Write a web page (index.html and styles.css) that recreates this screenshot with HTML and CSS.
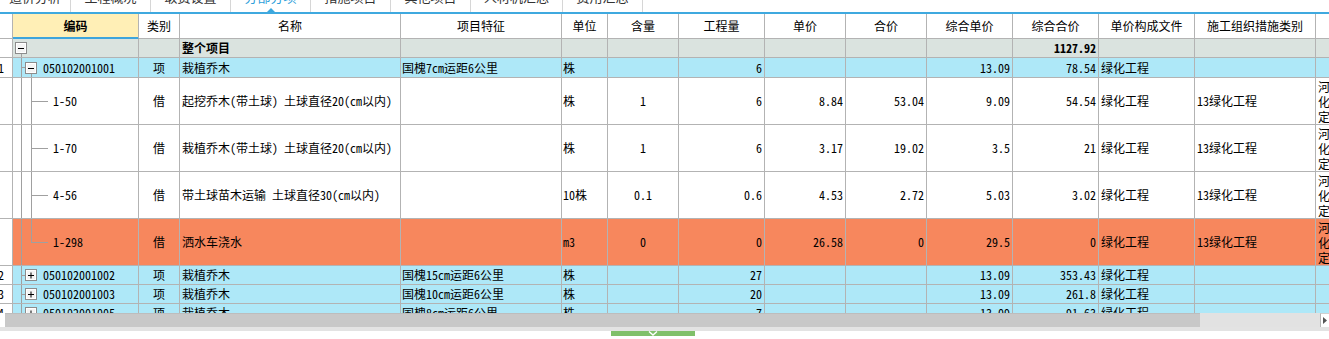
FILE: index.html
```html
<!DOCTYPE html>
<html lang="zh-CN">
<head>
<meta charset="utf-8">
<title>分部分项</title>
<link rel="stylesheet" href="styles.css">
</head>
<body>
<div class="tabs">
  <div class="tab first"><span class="tl">造价分析</span></div>
  <div class="tab"><span class="tl">工程概况</span></div>
  <div class="tab"><span class="tl">取费设置</span></div>
  <div class="tab active"><span class="tl">分部分项</span><span class="notch"></span></div>
  <div class="tab"><span class="tl">措施项目</span></div>
  <div class="tab"><span class="tl">其他项目</span></div>
  <div class="tab wide"><span class="tl">人材机汇总</span></div>
  <div class="tab"><span class="tl">费用汇总</span></div>
</div>
<div class="topline"></div>

<div class="grid">
  <div class="row head">
    <div></div><div class="ctr sel b">编码</div><div class="ctr">类别</div><div class="ctr">名称</div><div class="ctr">项目特征</div><div class="ctr">单位</div><div class="ctr">含量</div><div class="ctr">工程量</div><div class="ctr">单价</div><div class="ctr">合价</div><div class="ctr">综合单价</div><div class="ctr">综合合价</div><div class="ctr">单价构成文件</div><div class="ctr">施工组织措施类别</div><div></div>
  </div>

  <div class="row root">
    <div></div>
    <div class="code rootcode"><span class="node down"><svg width="12" height="12" viewBox="0 0 12 12"><rect x="0.5" y="0.5" width="11" height="11" fill="#f4f4f4" stroke="#8c8c8c"/><rect x="1.5" y="1.5" width="9" height="9" fill="none" stroke="#ffffff"/><path d="M3 6.5H9" stroke="#000" stroke-width="1"/></svg></span></div>
    <div></div><div class="l b">整个项目</div><div></div><div></div><div></div><div></div><div></div><div></div><div></div><div class="r b">1127.92</div><div></div><div></div><div></div>
  </div>

  <div class="row parent r1">
    <div class="num">1</div>
    <div class="code"><span class="gh"></span><span class="node down"><svg width="12" height="12" viewBox="0 0 12 12"><rect x="0.5" y="0.5" width="11" height="11" fill="#f4f4f4" stroke="#8c8c8c"/><rect x="1.5" y="1.5" width="9" height="9" fill="none" stroke="#ffffff"/><path d="M3 6.5H9" stroke="#000" stroke-width="1"/></svg></span><span class="txt">050102001001</span></div>
    <div class="ctr">项</div><div class="l">栽植乔木</div><div class="l1">国槐7cm运距6公里</div><div class="l1">株</div><div></div><div class="r">6</div><div></div><div></div><div class="r">13.09</div><div class="r">78.54</div><div class="l">绿化工程</div><div></div><div></div>
  </div>

  <div class="row child">
    <div></div>
    <div class="code"><span class="g"></span><span class="br"></span><span class="ctxt">1-50</span></div>
    <div class="ctr">借</div><div class="l">起挖乔木(带土球) 土球直径20(cm以内)</div><div></div><div class="l1">株</div><div class="ctr">1</div><div class="r">6</div><div class="r">8.84</div><div class="r">53.04</div><div class="r">9.09</div><div class="r">54.54</div><div class="l">绿化工程</div><div class="l">13绿化工程</div><div class="wrap">河<br>化<br>定</div>
  </div>

  <div class="row child">
    <div></div>
    <div class="code"><span class="g"></span><span class="br"></span><span class="ctxt">1-70</span></div>
    <div class="ctr">借</div><div class="l">栽植乔木(带土球) 土球直径20(cm以内)</div><div></div><div class="l1">株</div><div class="ctr">1</div><div class="r">6</div><div class="r">3.17</div><div class="r">19.02</div><div class="r">3.5</div><div class="r">21</div><div class="l">绿化工程</div><div class="l">13绿化工程</div><div class="wrap">河<br>化<br>定</div>
  </div>

  <div class="row child">
    <div></div>
    <div class="code"><span class="g"></span><span class="br"></span><span class="ctxt">4-56</span></div>
    <div class="ctr">借</div><div class="l">带土球苗木运输 土球直径30(cm以内)</div><div></div><div class="l1">10株</div><div class="ctr">0.1</div><div class="r">0.6</div><div class="r">4.53</div><div class="r">2.72</div><div class="r">5.03</div><div class="r">3.02</div><div class="l">绿化工程</div><div class="l">13绿化工程</div><div class="wrap">河<br>化<br>定</div>
  </div>

  <div class="row child hot">
    <div></div>
    <div class="code"><span class="g"></span><span class="br last"></span><span class="ctxt">1-298</span></div>
    <div class="ctr">借</div><div class="l">洒水车浇水</div><div></div><div class="l1">m3</div><div class="ctr">0</div><div class="r">0</div><div class="r">26.58</div><div class="r">0</div><div class="r">29.5</div><div class="r">0</div><div class="l">绿化工程</div><div class="l">13绿化工程</div><div class="wrap">河<br>化<br>定</div>
  </div>

  <div class="row parent">
    <div class="num">2</div>
    <div class="code"><span class="gh"></span><span class="node"><svg width="12" height="12" viewBox="0 0 12 12"><rect x="0.5" y="0.5" width="11" height="11" fill="#f4f4f4" stroke="#8c8c8c"/><rect x="1.5" y="1.5" width="9" height="9" fill="none" stroke="#ffffff"/><path d="M3 6.5H9M6 3.5V9.5" stroke="#000" stroke-width="1"/></svg></span><span class="txt">050102001002</span></div>
    <div class="ctr">项</div><div class="l">栽植乔木</div><div class="l1">国槐15cm运距6公里</div><div class="l1">株</div><div></div><div class="r">27</div><div></div><div></div><div class="r">13.09</div><div class="r">353.43</div><div class="l">绿化工程</div><div></div><div></div>
  </div>

  <div class="row parent">
    <div class="num">3</div>
    <div class="code"><span class="gh"></span><span class="node"><svg width="12" height="12" viewBox="0 0 12 12"><rect x="0.5" y="0.5" width="11" height="11" fill="#f4f4f4" stroke="#8c8c8c"/><rect x="1.5" y="1.5" width="9" height="9" fill="none" stroke="#ffffff"/><path d="M3 6.5H9M6 3.5V9.5" stroke="#000" stroke-width="1"/></svg></span><span class="txt">050102001003</span></div>
    <div class="ctr">项</div><div class="l">栽植乔木</div><div class="l1">国槐10cm运距6公里</div><div class="l1">株</div><div></div><div class="r">20</div><div></div><div></div><div class="r">13.09</div><div class="r">261.8</div><div class="l">绿化工程</div><div></div><div></div>
  </div>

  <div class="row parent">
    <div class="num">4</div>
    <div class="code"><span class="gh"></span><span class="node"><svg width="12" height="12" viewBox="0 0 12 12"><rect x="0.5" y="0.5" width="11" height="11" fill="#f4f4f4" stroke="#8c8c8c"/><rect x="1.5" y="1.5" width="9" height="9" fill="none" stroke="#ffffff"/><path d="M3 6.5H9M6 3.5V9.5" stroke="#000" stroke-width="1"/></svg></span><span class="txt">050102001005</span></div>
    <div class="ctr">项</div><div class="l">栽植乔木</div><div class="l1">国槐8cm运距6公里</div><div class="l1">株</div><div></div><div class="r">7</div><div></div><div></div><div class="r">13.09</div><div class="r">91.63</div><div class="l">绿化工程</div><div></div><div></div>
  </div>
</div>

<div class="hscroll">
  <div class="thumb"></div>
  <div class="track"></div>
  <div class="sbtn"><svg width="8" height="9" viewBox="0 0 8 9"><path d="M2 1L6 4.5L2 8Z" fill="#555"/></svg></div>
</div>
<div class="band"></div>
<div class="toggle"><svg width="10" height="5" viewBox="0 0 10 5"><path d="M1 0.5L5 4L9 0.5" fill="none" stroke="#fff" stroke-width="1.4"/></svg></div>
</body>
</html>
```

FILE: styles.css
```css
* {
  box-sizing: border-box;
  margin: 0;
  padding: 0;
}

html,
body {
  width: 1329px;
  height: 339px;
  overflow: hidden;
  background: #ffffff;
}

body {
  font-family: "Noto Sans Mono CJK SC", "Noto Sans CJK SC", "Liberation Mono", monospace;
  font-size: 12px;
  color: #000;
}

/* tabs */
.tabs {
  display: flex;
  height: 26px;
  margin-top: -14px;
}

.tab {
  width: 80px;
  border-right: 1px solid #d6d6d6;
  display: flex;
  flex-direction: column;
  align-items: center;
  padding-top: 3px;
  font-family: "Noto Sans CJK SC", sans-serif;
  font-size: 13px;
  line-height: 16px;
  color: #333;
}

.tab.first {
  width: 71px;
}

.tab.wide {
  width: 92px;
}

.tab.active {
  color: #2ea0da;
}

.notch {
  margin-top: auto;
  width: 0;
  height: 0;
  border-left: 4px solid transparent;
  border-right: 4px solid transparent;
  border-bottom: 4px solid #3aa7dd;
}

.topline {
  height: 2px;
  background: #3fa9df;
}

/* grid */
.grid {
  height: 299px;
  overflow: hidden;
}

.row {
  display: grid;
  grid-template-columns: 13px 126px 41px 221px 161px 46px 71px 86px 81px 81px 86px 86px 96px 121px 14px;
  width: 1330px;
  line-height: 14px;
}

.row > div {
  border-right: 1px solid #b3b3b3;
  border-bottom: 1px solid #b3b3b3;
  display: flex;
  align-items: center;
  overflow: hidden;
  white-space: nowrap;
}

.row > div:first-child {
  background: #fff;
}

.head {
  height: 25px;
  background: #fff;
}

.head .sel {
  background: #ffefb6;
  border-bottom-color: #3ea5dc;
  box-shadow: inset 0 -1px 0 #3ea5dc;
}

.root {
  height: 19px;
  background: #dae3df;
}

.parent {
  height: 19px;
  background: #aee8f8;
}

.parent.r1 {
  height: 20px;
}

.child {
  height: 47px;
  background: #fff;
}

.child.hot {
  background: #f7875d;
}

.ctr {
  justify-content: center;
}

.l {
  padding-left: 2px;
}

.l1 {
  padding-left: 1px;
}

.r {
  justify-content: flex-end;
  padding-right: 2px;
}

.b {
  font-weight: bold;
}

.num {
  justify-content: flex-end;
  padding-right: 8px;
}

.wrap {
  white-space: normal !important;
  line-height: 15px;
  padding-left: 2px;
  align-items: center;
}

/* tree */
.row > .code {
  align-items: stretch;
  padding-left: 8px;
}

.row > .code.rootcode {
  padding-left: 2px;
}

.node {
  width: 12px;
  display: flex;
  align-items: center;
}

.node svg {
  display: block;
}

.node.down {
  background: linear-gradient(#a0a0a0, #a0a0a0) 6px 100% / 1px 50% no-repeat;
}

.gh {
  width: 4px;
  background:
    linear-gradient(#a0a0a0, #a0a0a0) 0 0 / 1px 100% no-repeat,
    linear-gradient(#a0a0a0, #a0a0a0) 0 50% / 100% 1px no-repeat;
}

.g {
  width: 10px;
  background: linear-gradient(#a0a0a0, #a0a0a0) 0 0 / 1px 100% no-repeat;
}

.br {
  width: 17px;
  background:
    linear-gradient(#a0a0a0, #a0a0a0) 0 0 / 1px 100% no-repeat,
    linear-gradient(#a0a0a0, #a0a0a0) 0 50% / 100% 1px no-repeat;
}

.br.last {
  background:
    linear-gradient(#a0a0a0, #a0a0a0) 0 0 / 1px 50% no-repeat,
    linear-gradient(#a0a0a0, #a0a0a0) 0 50% / 100% 1px no-repeat;
}

.txt {
  align-self: center;
  margin-left: 6px;
}

.ctxt {
  align-self: center;
  margin-left: 5px;
}

/* scrollbar */
.hscroll {
  display: flex;
  height: 14px;
  padding-left: 5px;
  background: #fff;
}

.thumb {
  width: 1195px;
  background: #c8c8c8;
  border-top: 1px solid #bdbdbd;
}

.track {
  flex: 1;
  background: #e2e2e2;
}

.sbtn {
  width: 9px;
  background: #fff;
  border-left: 1px solid #b5b5b5;
  border-top: 1px solid #d0d0d0;
  display: flex;
  align-items: center;
}

.sbtn svg {
  display: block;
}

.band {
  height: 4px;
  background: #e3e3e3;
}

.toggle {
  width: 84px;
  height: 5px;
  margin-left: 611px;
  background: #80c06a;
  display: flex;
  justify-content: center;
}

.toggle svg {
  display: block;
}
```
